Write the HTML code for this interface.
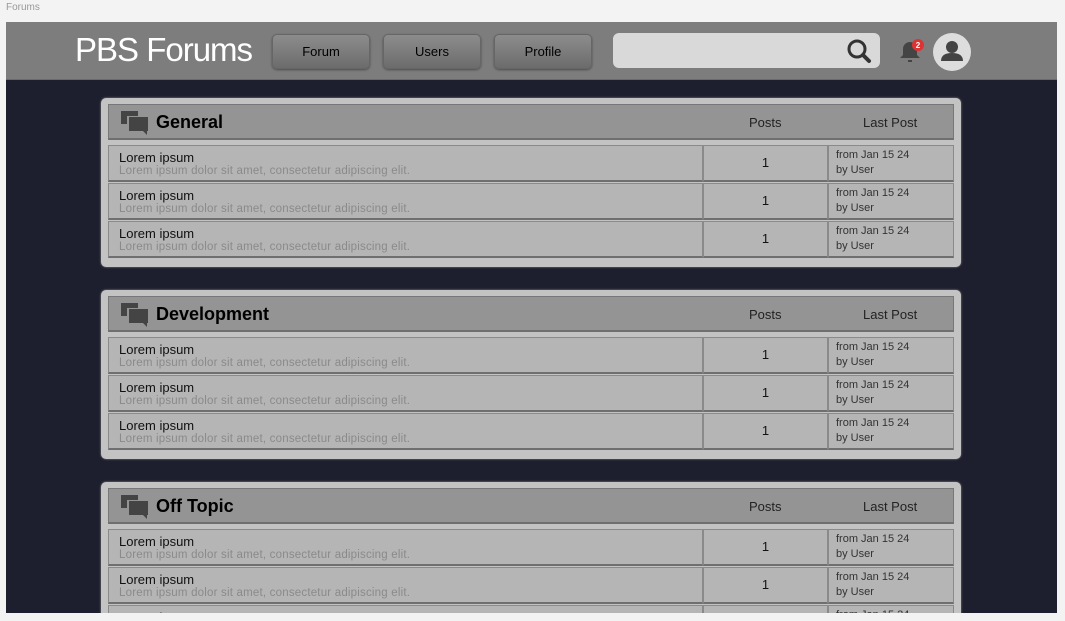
<!DOCTYPE html>
<html><head><style>
*{margin:0;padding:0;box-sizing:border-box}
body{width:1065px;height:621px;background:#f3f3f3;font-family:"Liberation Sans",sans-serif;position:relative;overflow:hidden}
.lbl{position:absolute;left:6px;top:2px;font-size:10px;color:#999}
.frame{position:absolute;left:6px;top:22px;width:1051px;height:591px;background:#1d1f2e;overflow:hidden}
.hdr{position:absolute;left:0;top:0;width:1051px;height:58px;background:#7d7d7d;border-bottom:1px solid #6a6a6a}
.logo{position:absolute;left:69px;top:9px;font-size:33px;color:#fff;letter-spacing:-1px}
.btn{position:absolute;top:12px;width:98px;height:35px;border-radius:5px;background:linear-gradient(#8c8c8c,#6c6c6c);box-shadow:0 1px 2px rgba(0,0,0,.4);border:1px solid #666;font-size:13px;color:#000;text-align:center;line-height:33px}
.search{position:absolute;left:607px;top:11px;width:267px;height:35px;border-radius:6px;background:#d9d9d9}
.panel{position:absolute;left:95px;width:860px;height:169px;background:#c3c3c3;border-radius:5px;box-shadow:0 0 2px #888}
.ph{position:absolute;left:7px;top:6px;width:846px;height:36px;background:#949494;border:1px solid #777;border-bottom:2px solid #6f6f6f}
.ph .t{position:absolute;left:47px;top:7px;font-size:18px;font-weight:bold;color:#000}
.ph .p{position:absolute;left:640px;top:10px;font-size:13px;color:#222}
.ph .l{position:absolute;left:754px;top:10px;font-size:13px;color:#222}
.ph svg{position:absolute;left:12px;top:6px}
.row{position:absolute;left:7px;width:846px;height:37px}
.c{position:absolute;top:0;height:37px;background:#b5b5b5;border:1px solid #8a8a8a;border-bottom:2px solid #6f6f6f}
.c1{left:0;width:595px}.c2{left:595px;width:125px;text-align:center;line-height:34px;font-size:13px;color:#111}.c3{left:720px;width:126px}
.c1 .a{position:absolute;left:10px;top:4px;font-size:13px;color:#111}
.c1 .b{position:absolute;left:10px;top:19px;font-size:11.5px;color:#8a8a8a;letter-spacing:.2px}
.c3 div{position:absolute;left:7px;font-size:11px;color:#333}
</style></head><body>
<div class="lbl">Forums</div>
<div class="frame">
<div class="hdr">
<div class="logo">PBS Forums</div>
<div class="btn" style="left:266px">Forum</div>
<div class="btn" style="left:377px">Users</div>
<div class="btn" style="left:488px">Profile</div>
<div class="search"><svg style="position:absolute;left:233px;top:5px" width="28" height="26" viewBox="0 0 28 26"><circle cx="11" cy="11" r="8" fill="none" stroke="#333" stroke-width="3"/><line x1="17" y1="17" x2="23" y2="23" stroke="#333" stroke-width="4" stroke-linecap="round"/></svg></div>
<svg style="position:absolute;left:890px;top:15px" width="30" height="30" viewBox="0 0 30 30"><path d="M4 21 L7 18 V12 A7 7 0 0 1 21 12 V18 L24 21 Z" fill="#444"/><rect x="12" y="23" width="4" height="2" fill="#444"/><circle cx="22" cy="8" r="6" fill="#d33"/><text x="22" y="11" font-size="8" fill="#fff" text-anchor="middle" font-family="Liberation Sans" font-weight="bold">2</text></svg>
<svg style="position:absolute;left:926px;top:10px" width="40" height="40" viewBox="0 0 40 40"><circle cx="20" cy="20" r="19" fill="#ddd"/><circle cx="20" cy="15" r="6" fill="#444"/><path d="M9 29 Q9 21 20 21 Q31 21 31 29 Z" fill="#444"/></svg>
</div>
</div>
<script>
var names=["General","Development","Off Topic"],h="";
names.forEach(function(n,i){
var top=76+i*192;
h+='<div class="panel" style="top:'+top+'px"><div class="ph"><svg width="28" height="24" viewBox="0 0 28 24"><path d="M0 0H17V5H6V13H0Z" fill="#444"/><path d="M8 6H27V20H26V24L22 20H8Z" fill="#444"/></svg><div class="t">'+n+'</div><div class="p">Posts</div><div class="l">Last Post</div></div>';
for(var r=0;r<3;r++){h+='<div class="row" style="top:'+(47+r*38)+'px"><div class="c c1"><div class="a">Lorem ipsum</div><div class="b">Lorem ipsum dolor sit amet, consectetur adipiscing elit.</div></div><div class="c c2">1</div><div class="c c3"><div style="top:3px">from Jan 15 24</div><div style="top:18px">by User</div></div></div>';}
h+='</div>';});
document.querySelector('.frame').insertAdjacentHTML('beforeend',h);
</script>
</body></html>
